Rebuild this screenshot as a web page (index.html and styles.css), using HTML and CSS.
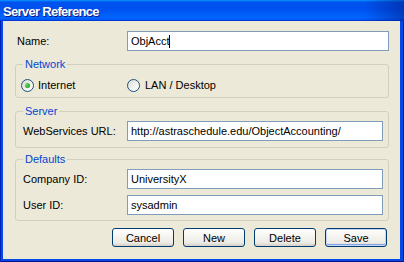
FILE: index.html
```html
<!DOCTYPE html>
<html lang="en">
<head>
    <meta charset="UTF-8">
    <title>Server Reference</title>
    <link rel="stylesheet" href="styles.css">
</head>
<body>
    <div class="window">
        <div class="titlebar">
            <span class="title">Server Reference</span>
        </div>
        <div class="frame">
            <div class="client">
                <div class="row name-row">
                    <span class="lbl">Name:</span>
                    <div class="field">ObjAcct<span class="caret"></span></div>
                </div>

                <fieldset class="group network">
                    <legend>Network</legend>
                    <div class="radios">
                        <span class="opt internet"><span class="radio on"></span>Internet</span>
                        <span class="opt"><span class="radio"></span>LAN / Desktop</span>
                    </div>
                </fieldset>

                <fieldset class="group server">
                    <legend>Server</legend>
                    <div class="row">
                        <span class="lbl">WebServices URL:</span>
                        <div class="field">http://astraschedule.edu/ObjectAccounting/</div>
                    </div>
                </fieldset>

                <fieldset class="group defaults">
                    <legend>Defaults</legend>
                    <div class="row">
                        <span class="lbl">Company ID:</span>
                        <div class="field">UniversityX</div>
                    </div>
                    <div class="row">
                        <span class="lbl">User ID:</span>
                        <div class="field">sysadmin</div>
                    </div>
                </fieldset>

                <div class="buttons">
                    <button type="button">Cancel</button>
                    <button type="button">New</button>
                    <button type="button">Delete</button>
                    <button type="button" class="default">Save</button>
                </div>
            </div>
        </div>
    </div>
</body>
</html>
```

FILE: styles.css
```css
* { margin:0; padding:0; box-sizing:border-box; }
body {
    width:404px;
    height:262px;
    overflow:hidden;
    font-family:"Liberation Sans", Arial, sans-serif;
    font-size:11px;
    color:#000;
}
.window {
    width:404px;
    height:262px;
    display:flex;
    flex-direction:column;
}
.titlebar {
    height:21px;
    flex:none;
    display:flex;
    align-items:center;
    padding:1px 0 0 3px;
    background:
        linear-gradient(to right, rgba(0,20,120,0) 90%, rgba(0,20,120,0.45) 100%),
        linear-gradient(to bottom, #0997ff 0%, #0053ee 10%, #0050ee 40%, #0066ff 85%, #005bff 92%, #003dd7 96%, #003dd7 100%);
}
.title {
    color:#fff;
    font-weight:bold;
    font-size:13px;
    letter-spacing:-0.7px;
    text-shadow:1px 1px 0 #0a1883;
}
.frame {
    flex:1;
    display:flex;
    padding:0 4px 3px 3px;
    background:#0846e6;
    box-shadow:inset 1px 0 #0020b8, inset -1px 0 #0020b8, inset 0 -1px #00138c;
}
.client {
    flex:1;
    background:#ece9d8;
    padding:10px 11px 0 12px;
    display:flex;
    flex-direction:column;
}
.row {
    display:grid;
    grid-template-columns:104px 1fr;
    align-items:center;
}
.name-row {
    grid-template-columns:110px 1fr;
    padding-left:2px;
}
.field {
    height:20px;
    border:1px solid #7f9db9;
    background:#fff;
    padding:0 3px;
    line-height:18px;
    white-space:nowrap;
    overflow:hidden;
}
.caret {
    display:inline-block;
    width:1px;
    height:13px;
    background:#000;
    vertical-align:-3px;
    margin-left:-1px;
}
.group {
    border:1px solid #d0d0bf;
    border-radius:3px;
    padding:0 5px 0 7px;
    min-width:0;
}
.group legend {
    color:#0046d5;
    line-height:13px;
    padding:0 2px;
}
.network {
    margin-top:7px;
    padding-bottom:5px;
}
.radios {
    display:grid;
    grid-template-columns:104px 1fr;
    margin-top:8px;
    height:13px;
}
.opt {
    display:flex;
    align-items:center;
    gap:4px;
    line-height:13px;
}
.internet { margin-left:-2px; }
.radio {
    width:13px;
    height:13px;
    border-radius:50%;
    border:1px solid #1c5180;
    background:linear-gradient(135deg, #dcdcd3 0%, #f4f4f0 60%, #fff 100%);
    display:flex;
    align-items:center;
    justify-content:center;
    flex:none;
}
.radio.on::after {
    content:"";
    width:5px;
    height:5px;
    border-radius:50%;
    background:radial-gradient(circle at 35% 35%, #65e061 0%, #2fb22c 55%, #1a8c18 100%);
}
.opt + .opt .radio { margin-right:1px; }
.server {
    margin-top:7px;
    padding-bottom:6px;
}
.server .row { margin-top:3px; }
.defaults {
    margin-top:5px;
    padding-bottom:5px;
}
.defaults .row { margin-top:3px; }
.defaults .row + .row { margin-top:6px; }
.buttons {
    display:flex;
    justify-content:flex-end;
    gap:9px;
    margin-top:7px;
    padding-right:2px;
}
button {
    width:62px;
    height:19px;
    border:1px solid #003c74;
    border-radius:3px;
    background:linear-gradient(to bottom, #fff 0%, #f6f5f1 40%, #ecebe6 80%, #d6d0c5 100%);
    font-family:"Liberation Sans", Arial, sans-serif;
    font-size:11px;
    color:#000;
}
button.default {
    box-shadow:inset 0 0 0 1px #c4d6f6, inset 0 -1px 0 1px #85a6e6;
}
```
